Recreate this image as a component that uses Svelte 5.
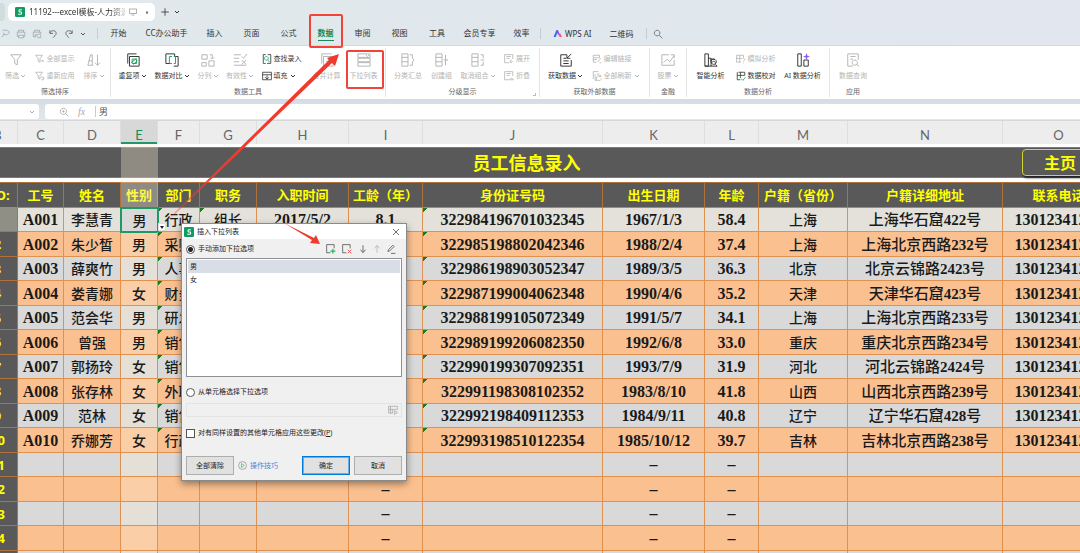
<script>
  // every icon is drawn on a 16 x 16 grid; the second path is the accent stroke
  const icons = {
    funnel: ['M2 2h12l-4.500 5.500v6l-3-1.500v-4.500z'],
    funnelAll: ['M1 2h11L8 7v6l-3-1.500V7zM10 9l4 4M14 9l-4 4'],
    funnelRedo: ['M1 2h11L8 7v6l-3-1.500V7zM10 10h4v4h-4'],
    sort: ['M1 14 4 2h2v12M2 9h4M1 14h6M12 2v12M9 11l3 3 3-3'],
    duplicate: ['M2 12V1h10M4 4h11v11H4z', 'M7 7h5v5H7zM6 11l6-5M8 13l5-4'],
    compare: ['M6 12H1V1h10v3M10 15h5V4h-4', 'M8 4H5v8h3M10 4h2v8h-2'],
    split: ['M1 2h6v5H1zM1 11h5v4H1zM9 9h6v6H9zM10 2h3v4M11 5l2 2 2-2'],
    validity: ['M1 2h8M1 6h6M1 10h6M1 14h14M10 4l2 2 4-5M10 8l5 5M15 8l-5 5'],
    find: ['M6 1H2v14h4M9 1h5v14H8', 'M7 4a3 3 0 1 0 .1 0M9 9l3 4'],
    fill: ['M1 2h14v12H1zM1 6h14M8 7v6M5 10l3 3 3-3'],
    consolidate: ['M2 12V1h11M4 4h11v11H4zM9.500 7v5M7 9.500h5'],
    dropList: ['M1 1h14v4H1zM1 6h14v4H1zM1 11h14v4H1zM10 2l2 2 2-2'],
    subtotal: ['M1 1h7v14H1zM1 5h7M1 10h7M10 2h3v4l2 2-2 2v4h-3'],
    group: ['M1 1h7v14H1zM1 5h7M1 10h7M12 2v12M10 8h5'],
    ungroup: ['M1 1h7v14H1zM1 5h7M1 10h7M11 2h3v4M11 14h3v-4M11 8h4'],
    expand: ['M8 14H1V1h13v7M4 4h7M4 7h5M11 9v5M9 12l2 2 3-3'],
    collapse: ['M8 14H1V1h13v7M4 4h7M4 7h5M9 14l3-3 3 3M9 14h6'],
    getData: ['M9 2H2v13h12V8M5 6h3M5 9h6M5 12h6M14 1 9 6M9 2v4h4'],
    editLink: ['M2 2h10M2 2v4h10V2M2 9h6M2 6v7h5M9 13l5-6M12 14h3'],
    refresh: ['M2 13V1h8M5 5v10h3M8 5h4M14 9a4 4 0 1 0 1 3M14 6v3h-3'],
    stock: ['M9 2H1v12h14V8M3 11l4-4 3 3 5-7M11 2h4v4'],
    smart: ['M1 15V1h4v14zM5 6h3v9M1 15h14M8 9V7h4M11 7a3 3 0 1 0 .1 0M9 11l2-2 2 2M13 13l2 2'],
    simulate: ['M1 2h11v4M8 13H1V2M1 7h9M6 2v11M11 7c4 0 4 3 1 4v1M12 14v1'],
    proof: ['M4 2h10v5M2 2v12h5M2 7h12M7 2v9', 'M8 12l3 3 4-5'],
    ai: ['M2 1h4v14H2zM9 8h5v7H9z'],
    query: ['M8 15H2V1h12v7M5 4h6M5 7h3M10 8a3 3 0 1 0 .1 0M12 13l3 2'],
    print: ['M4 5V2h8v3M4 12H2V5h12v7h-2M4 10h8v4H4z'],
    preview: ['M4 5V2h8v3M5 12H2V5h12v3M5 14V9h3M11 8a3 3 0 1 0 .1 0M13 13l2 2'],
    output: ['M4 2h6c6 0 6 7 0 7H6l-3 4M6 6v3'],
    undo: ['M3 2v5h5M3 6c3-5 10-4 10 1 0 3-3 4-5 7'],
    redo: ['M13 2v5H8M13 6C10 1 3 2 3 7c0 3 3 4 5 7'],
    search: ['M6.500 2a4.500 4.500 0 1 0 .1 0M10 10l5 5'],
    zoom: ['M7 2a5 5 0 1 0 .1 0M11 11l4 4M7 5v4M5 7h4'],
    screen: ['M1 2h14v9H1zM5 14h6'],
    plus: ['M8 2v12M2 8h12'],
    close: ['M2 2l12 12M14 2L2 14'],
    down: ['M8 2v11M4 9l4 5 4-5'],
    up: ['M8 14V3M4 7l4-5 4 5'],
    pen: ['M3 12l1-3 7-7 2 2-7 7zM8 15h7'],
    add: ['M7 14H1V1h12v6', 'M11 8v7M7 11.500h8'],
    remove: ['M7 14H1V1h12v6', 'M9 9l6 6M15 9l-6 6'],
    picker: ['M1 2h14v5H1zM1 7v6h6V7M4 2v11M10 9v6l5-3z']
  };

  const quickActions = [
    ['output', '输出'],
    ['print', '打印'],
    ['preview', '打印预览'],
    ['undo', '撤销'],
    ['redo', '恢复']
  ];

  const menus = [
    { label: '开始', width: 37 },
    { label: 'CC办公助手', width: 59 },
    { label: '插入', width: 37 },
    { label: '页面', width: 37 },
    { label: '公式', width: 37 },
    { label: '数据', width: 37, active: true },
    { label: '审阅', width: 37 },
    { label: '视图', width: 37 },
    { label: '工具', width: 38 },
    { label: '会员专享', width: 47 },
    { label: '效率', width: 37 }
  ];

  const big = (icon, label, width, opts = {}) => ({ icon, label, width, ...opts });
  const stack = (width, rows) => ({ width, rows });

  const groups = [
    {
      label: '筛选排序',
      width: 111,
      items: [
        big('funnel', '筛选', 28, { off: true, menu: true }),
        stack(50, [
          big('funnelAll', '全部显示', 0, { off: true }),
          big('funnelRedo', '重新应用', 0, { off: true })
        ]),
        big('sort', '排序', 29, { off: true, menu: true })
      ]
    },
    {
      label: '数据工具',
      width: 275,
      items: [
        big('duplicate', '重复项', 38, { menu: true }),
        big('compare', '数据对比', 41, { menu: true }),
        big('split', '分列', 31, { off: true, menu: true }),
        big('validity', '有效性', 33, { off: true, menu: true }),
        stack(52, [big('find', '查找录入', 0), big('fill', '填充', 0, { menu: true })]),
        big('consolidate', '合并计算', 36, { off: true }),
        big('dropList', '下拉列表', 38, { off: true })
      ]
    },
    {
      label: '分级显示',
      width: 154,
      launcher: true,
      items: [
        big('subtotal', '分类汇总', 36, { off: true }),
        big('group', '创建组', 31, { off: true }),
        big('ungroup', '取消组合', 42, { off: true, menu: true }),
        stack(36, [
          big('expand', '展开', 0, { off: true }),
          big('collapse', '折叠', 0, { off: true })
        ])
      ]
    },
    {
      label: '获取外部数据',
      width: 110,
      items: [
        big('getData', '获取数据', 42, { menu: true }),
        stack(58, [
          big('editLink', '编辑链接', 0, { off: true }),
          big('refresh', '全部刷新', 0, { off: true, menu: true })
        ])
      ]
    },
    { label: '金融', width: 37, items: [big('stock', '股票', 36, { off: true, menu: true })] },
    {
      label: '数据分析',
      width: 143,
      items: [
        big('smart', '智能分析', 40),
        stack(49, [big('simulate', '模拟分析', 0, { off: true }), big('proof', '数据校对', 0)]),
        big('ai', 'AI 数据分析', 46)
      ]
    },
    { label: '应用', width: 46, items: [big('query', '数据查询', 40, { off: true })] }
  ];

  const columns = [
    { key: 'B', width: 40, title: 'NO:' },
    { key: 'C', width: 46, title: '工号' },
    { key: 'D', width: 57, title: '姓名' },
    { key: 'E', width: 37, title: '性别' },
    { key: 'F', width: 42, title: '部门' },
    { key: 'G', width: 57, title: '职务' },
    { key: 'H', width: 92, title: '入职时间' },
    { key: 'I', width: 74, title: '工龄（年）' },
    { key: 'J', width: 180, title: '身份证号码' },
    { key: 'K', width: 102, title: '出生日期' },
    { key: 'L', width: 54, title: '年龄' },
    { key: 'M', width: 89, title: '户籍（省份）' },
    { key: 'N', width: 155, title: '户籍详细地址' },
    { key: 'O', width: 112, title: '联系电话' }
  ];

  const phone = '13012341234';
  const rows = [
    ['A001', '李慧青', '男', '行政', '组长', '2017/5/2', '8.1', '322984196701032345', '1967/1/3', '58.4', '上海', '上海华石窟422号', phone],
    ['A002', '朱少皙', '男', '采购', '', '', '', '322985198802042346', '1988/2/4', '37.4', '上海', '上海北京西路232号', phone],
    ['A003', '薛爽竹', '男', '人事', '', '', '', '322986198903052347', '1989/3/5', '36.3', '北京', '北京云锦路2423号', phone],
    ['A004', '娄青娜', '女', '财务', '', '', '', '322987199004062348', '1990/4/6', '35.2', '天津', '天津华石窟423号', phone],
    ['A005', '范会华', '男', '研发', '', '', '', '322988199105072349', '1991/5/7', '34.1', '上海', '上海北京西路233号', phone],
    ['A006', '曾强', '男', '销售', '', '', '', '322989199206082350', '1992/6/8', '33.0', '重庆', '重庆北京西路234号', phone],
    ['A007', '郭扬玲', '女', '销售', '', '', '', '322990199307092351', '1993/7/9', '31.9', '河北', '河北云锦路2424号', phone],
    ['A008', '张存林', '女', '外联', '', '', '', '322991198308102352', '1983/8/10', '41.8', '山西', '山西北京西路239号', phone],
    ['A009', '范林', '女', '销售', '', '', '', '322992198409112353', '1984/9/11', '40.8', '辽宁', '辽宁华石窟428号', phone],
    ['A010', '乔娜芳', '女', '行政', '', '', '', '322993198510122354', '1985/10/12', '39.7', '吉林', '吉林北京西路238号', phone],
    ...Array.from({ length: 5 }, () => ['', '', '', '', '', '', '–', '', '–', '–', '', '', ''])
  ];

  const numeric = ['C', 'H', 'I', 'J', 'K', 'L', 'O'];

  function flagged(key, row) {
    return row < 10 && (key === 'F' || key === 'J' || (key === 'G' && row === 0));
  }

  let source = $state('manual');
  let applyAll = $state(false);
  let picked = $state('男');
</script>

{#snippet icon(name, size = 'm')}
  <svg class="icon {size}" viewBox="0 0 16 16" aria-hidden="true">
    <path d={icons[name][0]} />
    {#if icons[name][1]}
      <path class="accent" class:red={name === 'remove'} d={icons[name][1]} />
    {/if}
    {#if name === 'ai'}
      <path class="spark" d="M12 0l1 3 3 1-3 1-1 3-1-3-3-1 3-1z" />
    {/if}
  </svg>
{/snippet}

{#snippet caret()}
  <svg class="caret" viewBox="0 0 6 6" aria-hidden="true"><path d="M1 2l2 2 2-2" /></svg>
{/snippet}

{#snippet logo()}
  <svg class="logo" viewBox="0 0 16 16" aria-hidden="true">
    <rect width="16" height="16" rx="2" />
    <path d="M11 4.500H6.500v3.500h4v3.500H5" />
  </svg>
{/snippet}

<div class="app">
  <header>
    <div class="tabs">
      <span class="previous-tab"></span>
      <div class="file-tab">
        {@render logo()}
        <span class="file-name">11192---excel模板-人力资源</span>
        {@render icon('screen', 's')}
        <i class="dot"></i>
      </div>
      <button class="plain new-tab" aria-label="新建">{@render icon('plus', 's')}</button>
      <button class="plain" aria-label="更多">{@render caret()}</button>
    </div>

    <nav class="menu-bar">
      <div class="quick">
        {#each quickActions as [name, label]}
          <button class="plain" class:dark={name === 'undo' || name === 'redo'} aria-label={label}>
            {@render icon(name, 's')}
          </button>
        {/each}
        <button class="plain dark" aria-label="自定义">{@render caret()}</button>
      </div>
      <i class="rule"></i>
      {#each menus as menu}
        <button class="plain menu" class:active={menu.active} style:width="{menu.width}px">
          <span>{menu.label}</span>
        </button>
      {/each}
      <i class="rule"></i>
      <button class="plain wps">
        <svg class="wps-logo" viewBox="0 0 16 16" aria-hidden="true">
          <path class="blue" d="M1 14 6 2h3L5 14z" />
          <path class="violet" d="M6 2h3l3 8H9z" />
          <path class="pink" d="M8 8h5l3 6h-4z" />
        </svg>
        WPS AI
      </button>
      <button class="plain">二维码</button>
      <i class="rule"></i>
      <button class="plain look" aria-label="搜索">{@render icon('search', 's')}</button>
    </nav>
  </header>

  <div class="ribbon">
    {#each groups as group}
      <section class="group" style:width="{group.width}px">
        <div class="tools">
          {#each group.items as item}
            {#if item.rows}
              <div class="stack" style:width="{item.width}px">
                {#each item.rows as row}
                  <button class="plain small" class:off={row.off}>
                    {@render icon(row.icon, 's')}
                    {row.label}
                    {#if row.menu}{@render caret()}{/if}
                  </button>
                {/each}
              </div>
            {:else}
              <button class="plain tool" class:off={item.off} style:width="{item.width}px">
                {@render icon(item.icon)}
                <span>{item.label}{#if item.menu}{@render caret()}{/if}</span>
              </button>
            {/if}
          {/each}
        </div>
        <div class="group-label">{group.label}</div>
        {#if group.launcher}<i class="launcher"></i>{/if}
      </section>
    {/each}
  </div>

  <div class="formula-bar">
    <div class="name-box">{@render caret()}</div>
    <div class="formula">
      {@render icon('zoom', 's')}
      <span class="fx">fx</span>
      <i class="rule"></i>
      <input value="男" aria-label="编辑栏" />
    </div>
  </div>

  <main class="sheet">
    <table>
      <colgroup>
        {#each columns as col}
          <col style:width="{col.width}px" />
        {/each}
      </colgroup>
      <thead>
        <tr class="letters">
          {#each columns as col}
            <th class:current={col.key === 'E'}>{col.key}</th>
          {/each}
        </tr>
        <tr class="banner">
          <td colspan={columns.length}>
            <div>
              <h1>员工信息录入</h1>
              <button class="home">主页</button>
            </div>
          </td>
        </tr>
        <tr class="spacer"><td colspan={columns.length}></td></tr>
        <tr class="titles">
          {#each columns as col}
            <th>{col.title}</th>
          {/each}
        </tr>
      </thead>
      <tbody>
        {#each rows as row, r}
          <tr class:current={r === 0}>
            <th>{r + 1}</th>
            {#each row as value, c}
              {@const key = columns[c + 1].key}
              <td
                class:numeric={numeric.includes(key)}
                class:address={key === 'N'}
                class:lit={key === 'E'}
                class:flag={flagged(key, r)}
                class:selected={key === 'E' && r === 0}
              >
                {#if key === 'N' && value}
                  {@const [place, number] = value.split(/(\d+)/)}
                  {place}<b>{number}</b>号
                {:else}
                  {value}
                {/if}
                {#if key === 'E' && r === 0}
                  <button class="cell-menu" aria-label="下拉"></button>
                {/if}
              </td>
            {/each}
          </tr>
        {/each}
      </tbody>
    </table>
    <div class="column-light"></div>
  </main>

  <div class="dialog" role="dialog" aria-labelledby="dialog-title">
    <div class="dialog-head">
      {@render logo()}
      <span id="dialog-title">插入下拉列表</span>
      <button class="plain" aria-label="关闭">{@render icon('close', 's')}</button>
    </div>
    <div class="dialog-body">
      <div class="option-row">
        <label><input type="radio" bind:group={source} value="manual" />手动添加下拉选项</label>
        <div class="list-tools">
          <button class="plain" aria-label="添加">{@render icon('add', 's')}</button>
          <button class="plain" aria-label="删除">{@render icon('remove', 's')}</button>
          <button class="plain" aria-label="下移">{@render icon('down', 's')}</button>
          <button class="plain faint" aria-label="上移">{@render icon('up', 's')}</button>
          <button class="plain" aria-label="编辑">{@render icon('pen', 's')}</button>
        </div>
      </div>
      <div class="list" role="listbox" aria-label="下拉选项">
        {#each ['男', '女'] as option}
          <button
            class="plain"
            role="option"
            aria-selected={picked === option}
            onclick={() => (picked = option)}>{option}</button
          >
        {/each}
      </div>
      <label class="from-cells">
        <input type="radio" bind:group={source} value="cells" />从单元格选择下拉选项
      </label>
      <div class="range">
        <input type="text" aria-label="单元格区域" disabled={source !== 'cells'} />
        {@render icon('picker', 's')}
      </div>
      <label class="apply">
        <input type="checkbox" bind:checked={applyAll} />
        <span>对有同样设置的其他单元格应用这些更改(<u>P</u>)</span>
      </label>
      <div class="actions">
        <button>全部清除</button>
        <a href="#tips">
          <svg class="play" viewBox="0 0 16 16" aria-hidden="true">
            <circle cx="8" cy="8" r="7" />
            <path d="M6 4.500v7L11 8z" />
          </svg>
          操作技巧
        </a>
        <button class="primary">确定</button>
        <button>取消</button>
      </div>
    </div>
  </div>

  <svg class="marks" width="420" height="260" viewBox="0 0 420 260" aria-hidden="true">
    <defs>
      <linearGradient id="tail" gradientUnits="userSpaceOnUse" x1="172" y1="217" x2="215" y2="175">
        <stop offset="0" stop-color="#f03a2e" stop-opacity="0.3" />
        <stop offset="1" stop-color="#f03a2e" />
      </linearGradient>
    </defs>
    <rect x="310" y="15" width="32" height="32" rx="1" />
    <rect x="347" y="51" width="36" height="37" rx="1" />
    <path class="long" d="M171 216 L329 60 L327 58 L339 54 L335 66 L332 63 L172 217 Z" />
    <path d="M284 223 L314 238 L316 235 L320 244 L310 243 L312 240 Z" />
  </svg>
</div>

<style>
  :global(body) {
    margin: 0;
  }

  .app {
    position: relative;
    display: flex;
    flex-direction: column;
    height: 100vh;
    overflow: hidden;
    font-family: 'Noto Sans', 'Noto Sans CJK SC', sans-serif;
    font-size: 8px;
    line-height: 12px;
    color: #333;
    background: #fff;
  }

  .app * {
    box-sizing: border-box;
  }

  button,
  input {
    font: inherit;
    color: inherit;
  }

  .plain {
    display: flex;
    align-items: center;
    padding: 0;
    white-space: nowrap;
    background: none;
    border: 0;
  }

  /* Icons */

  .icon {
    flex: none;
    fill: none;
    stroke: currentColor;
    stroke-width: 1.1;
  }

  .icon.m {
    width: 14px;
    height: 14px;
  }

  .icon.s {
    width: 10px;
    height: 10px;
    stroke-width: 1.3;
  }

  .icon .accent {
    stroke: #1aa566;
  }

  .icon .red {
    stroke: #e64545;
  }

  .icon .spark {
    fill: #8b5cf0;
    stroke: none;
  }

  .caret {
    flex: none;
    width: 6px;
    height: 6px;
    fill: none;
    stroke: currentColor;
  }

  .logo {
    flex: none;
    width: 10px;
    height: 10px;
    fill: #129b60;
  }

  .logo path {
    fill: none;
    stroke: #fff;
    stroke-width: 1.6;
  }

  .rule {
    flex: none;
    width: 1px;
    height: 11px;
    background: #c6cdd2;
  }

  /* Title tabs and menus */

  header {
    flex: none;
    height: 46px;
    background: linear-gradient(90deg, #e0e9eb, #e1e6ef);
    border-bottom: 1px solid #d3dbe2;
  }

  .tabs {
    display: flex;
    align-items: center;
    height: 22px;
    padding-top: 2px;
  }

  .previous-tab {
    width: 5px;
    height: 18px;
    margin-right: 3px;
    background: #d2dbdd;
    border-radius: 0 4px 4px 0;
  }

  .file-tab {
    display: flex;
    gap: 4px;
    align-items: center;
    width: 147px;
    height: 18px;
    padding: 0 7px;
    background: #fff;
    border-radius: 5px;
  }

  .file-tab .icon {
    width: 8px;
    height: 8px;
    color: #888;
  }

  .file-name {
    flex: none;
    width: 96px;
    overflow: hidden;
    white-space: nowrap;
    mask-image: linear-gradient(90deg, #000 85%, #0004);
  }

  .dot {
    width: 3px;
    height: 3px;
    margin-left: 5px;
    background: #777;
    border-radius: 50%;
  }

  .new-tab {
    margin: 0 4px 0 5px;
  }

  .menu-bar {
    display: flex;
    align-items: center;
    height: 23px;
  }

  .quick {
    display: flex;
    gap: 6px;
    align-items: center;
    width: 97px;
    color: #a1a8ab;
  }

  .quick .dark {
    color: #555;
  }

  .menu-bar > .rule:nth-of-type(1) {
    margin-right: 2px;
  }

  .menu {
    justify-content: center;
  }

  .menu span {
    padding: 1px 0;
    border-bottom: 1px solid transparent;
  }

  .active span {
    font-weight: 700;
    color: #128a5b;
    border-color: #128a5b;
  }

  .wps {
    gap: 3px;
    margin: 0 18px 0 12px;
  }

  .wps-logo {
    width: 9px;
    height: 9px;
  }

  .blue {
    fill: #2e6bf5;
  }

  .violet {
    fill: #7a48ee;
  }

  .pink {
    fill: #f2558c;
  }

  .look {
    margin-left: 6px;
    color: #666;
  }

  .menu-bar > .rule:last-of-type {
    margin-left: 12px;
  }

  /* Ribbon */

  .ribbon {
    display: flex;
    flex: none;
    height: 53px;
    padding: 2px 0;
    font-size: 7px;
    line-height: 10px;
    background: #fff;
  }

  .group {
    position: relative;
    flex: none;
    border-right: 1px solid #e4e4e4;
  }

  .group:last-child {
    border: 0;
  }

  .tools {
    display: flex;
    justify-content: center;
    height: 39px;
  }

  .tool {
    flex: none;
    flex-direction: column;
    gap: 4px;
    padding-top: 5px;
  }

  .tool span {
    display: flex;
    gap: 1px;
    align-items: center;
  }

  .stack {
    display: flex;
    flex: none;
    flex-direction: column;
    gap: 7px;
    padding: 6px 0 0 5px;
  }

  .small {
    gap: 2px;
    height: 10px;
  }

  .off {
    color: #b4b4b4;
  }

  .group-label {
    height: 10px;
    color: #666;
    text-align: center;
  }

  .launcher {
    position: absolute;
    right: 3px;
    bottom: 1px;
    width: 3px;
    height: 3px;
    border: solid #bbb;
    border-width: 0 1px 1px 0;
  }

  /* Formula bar */

  .formula-bar {
    display: flex;
    flex: none;
    gap: 6px;
    height: 22px;
    padding: 5px 0 1px;
    background: linear-gradient(#d5dde4, #e1e8ec);
    border-bottom: 1px solid #d4d8da;
  }

  .name-box {
    display: flex;
    align-items: center;
    justify-content: flex-end;
    width: 39px;
    padding-right: 4px;
    color: #aaa;
    background: #fff;
    border-radius: 0 3px 3px 0;
  }

  .formula {
    display: flex;
    flex: 1;
    align-items: center;
    padding-left: 14px;
    color: #aaa;
    background: #fff;
    border-radius: 3px 0 0 3px;
  }

  .fx {
    width: 17px;
    margin-left: 9px;
    font-family: 'Liberation Serif', serif;
    font-size: 10px;
    font-style: italic;
  }

  .formula input {
    flex: 1;
    height: 14px;
    padding: 0 0 0 3px;
    font-size: 9px;
    color: #555;
    background: none;
    border: 0;
    outline: 0;
  }

  /* Sheet */

  .sheet {
    position: relative;
    flex: 1;
    min-height: 0;
    margin-left: -22px;
    overflow: hidden;
  }

  table {
    width: 100%;
    min-width: 1137px;
    table-layout: fixed;
    border-spacing: 0;
  }

  th,
  td {
    padding: 0;
    line-height: 20px;
    text-align: center;
    white-space: nowrap;
  }

  .letters th {
    height: 23px;
    padding-top: 4px;
    font-family: Lato, sans-serif;
    font-size: 13px;
    font-weight: 400;
    line-height: 18px;
    color: #666;
    background: #ededed;
    border-right: 1px solid #dedede;
  }

  .letters .current {
    color: #128a5b;
    background: #d8d8d8;
    box-shadow: inset 0 -2px #23966a;
  }

  .banner td {
    height: 34px;
    padding-top: 3px;
  }

  .banner div {
    display: flex;
    align-items: center;
    height: 31px;
    background: #595959;
    border: solid #a0703f;
    border-width: 1px 0;
  }

  h1 {
    flex: 1;
    padding-left: 53px;
    margin: 0;
    font-size: 18px;
    line-height: 26px;
    color: #ff0;
  }

  .home {
    width: 76px;
    height: 27px;
    padding: 0;
    margin-right: 17px;
    font-size: 16px;
    font-weight: 700;
    color: #ff0;
    background: #595959;
    border: 1px solid #d6d632;
    border-radius: 4px;
    box-shadow: 1px 2px 2px #222;
  }

  .spacer td {
    height: 4px;
  }

  .titles th {
    height: 26px;
    font-size: 13px;
    color: #ff0;
    background: #595959;
    border: solid #b0713a;
    border-width: 1px 1px 0 0;
    border-bottom: 1px solid #8e8e8e;
  }

  tbody tr {
    height: 24px;
    background: #d9d9d9;
  }

  tbody tr:nth-child(even) {
    height: 25px;
    background: #fac090;
  }

  tbody tr.current {
    background: #e3e1d9;
  }

  tbody td {
    padding-top: 1px;
    font-size: 14px;
    font-weight: 500;
    color: #1a1a1a;
    border: solid #df9150;
    border-width: 0 1px 1px 0;
  }

  .numeric,
  .address {
    font-family: 'Liberation Serif', 'Noto Sans CJK SC', serif;
    font-size: 16px;
    font-weight: 700;
  }

  .address {
    font-size: 15px;
    font-weight: 500;
  }

  tbody th {
    font-size: 13px;
    color: #ff0;
    background: #595959;
    border: solid #b0713a;
    border-width: 0 1px 1px 0;
  }

  tbody .current th {
    color: #8f8f86;
    background: #8f8f86;
  }

  .flag {
    background: linear-gradient(135deg, #14801c 3px, transparent 3px);
  }

  /* keeps the text above the column highlight */
  .lit {
    position: relative;
    z-index: 2;
  }

  td.selected {
    background: #d9d9d9;
    border: 0;
    outline: 2px solid #1f9866;
    outline-offset: -1px;
  }

  .cell-menu {
    position: absolute;
    right: -8px;
    bottom: 1px;
    width: 8px;
    height: 8px;
    padding: 0;
    background: #fff;
    border: 1px solid #ddd;
  }

  .cell-menu::after {
    position: absolute;
    top: 2px;
    left: 1px;
    content: '';
    border: 2px solid transparent;
    border-top: 3px solid #222;
    border-bottom: 0;
  }

  .column-light {
    position: absolute;
    top: 23px;
    bottom: 0;
    left: 143px;
    z-index: 1;
    width: 37px;
    pointer-events: none;
    background: rgba(250, 238, 210, 0.34);
  }

  /* Dialog */

  .dialog {
    position: absolute;
    top: 223px;
    left: 181px;
    z-index: 3;
    width: 226px;
    font-size: 7px;
    color: #222;
    background: #f0f0f0;
    border: 1px solid #8a8a8a;
    box-shadow: 0 3px 7px rgba(0, 0, 0, 0.4);
  }

  .dialog-head {
    display: flex;
    gap: 3px;
    align-items: center;
    height: 15px;
    padding: 0 6px 0 2px;
    background: #fff;
  }

  .dialog-head .plain {
    margin-left: auto;
  }

  .dialog-head .icon {
    width: 8px;
    height: 8px;
  }

  .dialog-body {
    display: flex;
    flex-direction: column;
    padding: 3px 4px 5px;
  }

  .option-row {
    display: flex;
    align-items: center;
    justify-content: space-between;
    height: 14px;
    margin-bottom: 2px;
  }

  label {
    display: flex;
    gap: 3px;
    align-items: center;
  }

  input[type='radio'],
  input[type='checkbox'] {
    width: 9px;
    height: 9px;
    margin: 0;
    appearance: none;
    background: #fff;
    border: 1px solid #555;
  }

  input[type='radio'] {
    border-radius: 50%;
  }

  input[type='radio']:checked {
    background: radial-gradient(circle, #222 2px, #fff 3px);
  }

  input[type='checkbox']:checked {
    background: #555;
  }

  .list-tools {
    display: flex;
    gap: 4px;
    padding-right: 6px;
    color: #555;
  }

  .list-tools .plain:nth-child(-n + 2) {
    margin-right: 2px;
  }

  .list-tools .accent:not(.red) {
    stroke: #17c148;
    stroke-width: 2;
  }

  .list-tools .faint {
    color: #b5b5b5;
  }

  .list {
    height: 119px;
    padding: 1px;
    background: #fff;
    border: 1px solid #8e9297;
  }

  .list .plain {
    width: 100%;
    height: 13px;
    padding-left: 2px;
  }

  .list [aria-selected='true'] {
    background: #d9dee6;
  }

  .from-cells {
    margin: 9px 0 5px;
  }

  .range {
    display: flex;
    align-items: center;
    height: 14px;
    padding-right: 3px;
    color: #aaa;
    border: 1px solid #e4e4e4;
  }

  .range input {
    flex: 1;
    min-width: 0;
    height: 12px;
    padding: 0;
    background: none;
    border: 0;
  }

  .apply {
    margin: 10px 0 17px;
  }

  .actions {
    display: flex;
    gap: 4px;
    align-items: center;
  }

  .actions button {
    width: 48px;
    height: 19px;
    padding: 0;
    background: #e1e1e1;
    border: 1px solid #adadad;
  }

  .actions .primary {
    border: 1px solid #0078d7;
    outline: 1px solid #6aaee4;
    outline-offset: -2px;
  }

  .actions a {
    display: flex;
    flex: 1;
    gap: 3px;
    align-items: center;
    color: #3f87dc;
    text-decoration: none;
  }

  .play {
    width: 9px;
    height: 9px;
    fill: none;
    stroke: #777;
  }

  .play path {
    stroke: #1aa566;
  }

  /* Annotations over the page */

  .marks {
    position: absolute;
    top: 0;
    left: 0;
    z-index: 4;
    pointer-events: none;
    fill: #f03a2e;
  }

  .marks .long {
    fill: url(#tail);
  }

  .marks rect {
    fill: none;
    stroke: #f04438;
    stroke-width: 2;
  }
</style>
